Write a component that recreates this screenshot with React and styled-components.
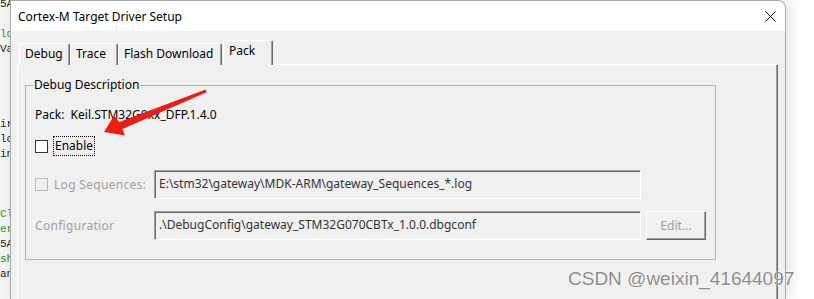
import React from "react";
import styled, { createGlobalStyle } from "styled-components";

const GlobalStyle = createGlobalStyle`
  html, body {
    margin: 0;
    padding: 0;
    background: #ffffff;
    overflow: hidden;
  }
  body {
    font-family: "Noto Sans", "Open Sans", sans-serif;
    font-size: 12px;
    color: #000;
  }
`;

const codeLines = [
  { t: "5A", c: "#1a1a1a" },
  { t: "", c: "" },
  { t: "ld", c: "#1f9a1f" },
  { t: "Va", c: "#1a1a1a" },
  { t: "", c: "" },
  { t: "", c: "" },
  { t: "", c: "" },
  { t: "", c: "" },
  { t: "ir", c: "#1a1a1a" },
  { t: "lo", c: "#1a1a1a" },
  { t: "in", c: "#1a1a1a" },
  { t: "", c: "" },
  { t: "", c: "" },
  { t: "", c: "" },
  { t: "Cl", c: "#1f9a1f" },
  { t: "er", c: "#1f9a1f" },
  { t: "5A", c: "#1a1a1a" },
  { t: "sh", c: "#1f8a1f" },
  { t: "an", c: "#1a1a1a" },
];

export default function App() {
  return (
    <>
      <GlobalStyle />
      <Page>
        <CodeStrip>
          {codeLines.map((l, i) => (
            <CodeLine key={i} $color={l.c}>
              {l.t || "\u00a0"}
            </CodeLine>
          ))}
        </CodeStrip>

        <Window>
          <TitleBar>
            <Title>Cortex-M Target Driver Setup</Title>
            <CloseButton>
              <svg width="11" height="11" viewBox="0 0 11 11">
                <path d="M0.5 0.5 L10.5 10.5 M10.5 0.5 L0.5 10.5" stroke="#111" strokeWidth="1" />
              </svg>
            </CloseButton>
          </TitleBar>

          <Body>
            <TabRow>
              <Tab $w={51}>Debug</Tab>
              <Tab $w={48}>Trace</Tab>
              <Tab $w={104}>Flash Download</Tab>
              <Tab $w={50} $active>
                Pack
              </Tab>
            </TabRow>

            <Pane>
              <Group>
                <Legend>Debug Description</Legend>
                <PackRow>
                  Pack:&nbsp;&nbsp;Keil.STM32G0xx_DFP.1.4.0
                </PackRow>

                <CheckRow>
                  <CheckBox />
                  <FocusLabel>Enable</FocusLabel>
                </CheckRow>

                <FieldRow $top={14}>
                  <LabelCell>
                    <CheckBox $disabled />
                    <DimText>Log Sequences:</DimText>
                  </LabelCell>
                  <Field>E:\stm32\gateway\MDK-ARM\gateway_Sequences_*.log</Field>
                </FieldRow>

                <FieldRow $top={12}>
                  <LabelCell>
                    <DimText>Configuratior</DimText>
                  </LabelCell>
                  <Field>.\DebugConfig\gateway_STM32G070CBTx_1.0.0.dbgconf</Field>
                  <Button>Edit...</Button>
                </FieldRow>
              </Group>
            </Pane>
          </Body>
        </Window>

        <ShadowSpace />

        <Arrow width="814" height="299" viewBox="0 0 814 299">
          <polygon
            points="205.6,89.6 119.2,122 114,115.5 104,132 125,135.5 122.4,129 206.6,92.2"
            fill="#ee1c12"
          />
        </Arrow>

        <Watermark>CSDN @weixin_41644097</Watermark>
      </Page>
    </>
  );
}

const Page = styled.div`
  position: relative;
  display: flex;
  width: 814px;
  height: 299px;
  overflow: hidden;
`;

const CodeStrip = styled.div`
  flex: 0 0 10px;
  display: flex;
  flex-direction: column;
  overflow: hidden;
  background: #f4f4f4;
  margin-top: -3px;
`;

const CodeLine = styled.div`
  font-family: "Liberation Mono", "DejaVu Sans Mono", monospace;
  font-size: 11px;
  line-height: 15px;
  white-space: nowrap;
  color: ${(p) => p.$color || "#111"};
`;

const Window = styled.div`
  flex: 0 0 776px;
  display: flex;
  flex-direction: column;
  box-sizing: border-box;
  border: 1px solid #a9a9a9;
  border-bottom: none;
  border-top-right-radius: 8px;
  background: #f0f0f0;
  box-shadow: 4px 0 14px rgba(0, 0, 0, 0.12);
  z-index: 1;
`;

const TitleBar = styled.div`
  height: 30px;
  display: flex;
  align-items: center;
  justify-content: space-between;
  background: #ffffff;
  border-top-right-radius: 8px;
  padding: 0 9px 0 7px;
`;

const Title = styled.span`
  font-size: 12px;
  color: #000;
`;

const CloseButton = styled.div`
  display: flex;
  align-items: center;
`;

const Body = styled.div`
  flex: 1;
  display: flex;
  flex-direction: column;
  padding: 9px 0 0 6px;
`;

const TabRow = styled.div`
  display: flex;
  align-items: flex-end;
  padding-left: 2px;
  position: relative;
  z-index: 2;
  margin-bottom: -1px;
`;

const Tab = styled.div`
  box-sizing: border-box;
  width: ${(p) => p.$w}px;
  height: ${(p) => (p.$active ? 25 : 22)}px;
  display: flex;
  align-items: flex-start;
  padding-left: 5px;
  padding-top: 1px;
  font-size: 12px;
  line-height: 17px;
  background: #f0f0f0;
  border-top: 1px solid #ffffff;
  border-left: 1px solid #ffffff;
  border-right: 1px solid #696969;
  box-shadow: inset -1px 0 0 #a0a0a0;
  border-top-left-radius: 2px;
  border-top-right-radius: 2px;
  margin-left: ${(p) => (p.$active ? "1px" : "0")};
`;

const Pane = styled.div`
  flex: 1;
  box-sizing: border-box;
  width: 761px;
  border-top: 1px solid #ffffff;
  border-left: 1px solid #ffffff;
  border-right: 1px solid #696969;
  box-shadow: inset -1px 0 0 #a0a0a0;
  padding: 12px 0 0 7px;
`;

const Group = styled.fieldset`
  box-sizing: border-box;
  width: 691px;
  height: 183px;
  margin: 0;
  padding: 0 0 0 9px;
  border: 1px solid #b4b4b4;
  display: flex;
  flex-direction: column;
`;

const Legend = styled.legend`
  font-size: 12px;
  padding: 0 1px;
  margin-left: -2px;
  line-height: 16px;
`;

const PackRow = styled.div`
  font-size: 12px;
  line-height: 16px;
  margin-top: 14px;
`;

const CheckRow = styled.div`
  display: flex;
  align-items: center;
  height: 20px;
  margin-top: 13px;
  gap: 5px;
`;

const CheckBox = styled.span`
  box-sizing: border-box;
  width: 13px;
  height: 13px;
  flex: 0 0 13px;
  border: 1px solid ${(p) => (p.$disabled ? "#bcbcbc" : "#333333")};
  background: ${(p) => (p.$disabled ? "#f0f0f0" : "#ffffff")};
`;

const FocusLabel = styled.span`
  font-size: 12px;
  line-height: 18px;
  padding: 0 1px;
  border: 1px dotted #000;
`;

const FieldRow = styled.div`
  display: flex;
  align-items: center;
  height: 29px;
  margin-top: ${(p) => p.$top}px;
  gap: 5px;
`;

const LabelCell = styled.div`
  flex: 0 0 114px;
  display: flex;
  align-items: center;
  gap: 6px;
`;

const DimText = styled.span`
  color: #a0a0a0;
  font-size: 12px;
  letter-spacing: 0.3px;
`;

const Field = styled.div`
  box-sizing: border-box;
  width: 487px;
  height: 29px;
  display: flex;
  align-items: center;
  padding: 0 0 3px 4px;
  font-size: 12px;
  color: #333;
  background: #f0f0f0;
  border-top: 1px solid #a0a0a0;
  border-left: 1px solid #a0a0a0;
  border-right: 1px solid #ffffff;
  border-bottom: 1px solid #ffffff;
  box-shadow: inset 1px 1px 0 #696969;
`;

const Button = styled.div`
  box-sizing: border-box;
  width: 60px;
  height: 29px;
  display: flex;
  align-items: center;
  justify-content: center;
  font-size: 12px;
  color: #a0a0a0;
  background: #f0f0f0;
  border-top: 1px solid #ffffff;
  border-left: 1px solid #ffffff;
  border-right: 1px solid #696969;
  border-bottom: 1px solid #696969;
  box-shadow: inset -1px -1px 0 #a0a0a0;
`;

const ShadowSpace = styled.div`
  flex: 1;
  background: #ffffff;
`;

const Arrow = styled.svg`
  position: absolute;
  left: 0;
  top: 0;
  z-index: 5;
  pointer-events: none;
`;

const Watermark = styled.div`
  position: absolute;
  left: 568px;
  top: 268px;
  z-index: 6;
  font-family: "Liberation Sans", Arial, sans-serif;
  font-size: 19px;
  color: #8c8c8c;
  text-shadow: 0 0 1px #fff, 0 0 2px #fff;
  white-space: nowrap;
`;
